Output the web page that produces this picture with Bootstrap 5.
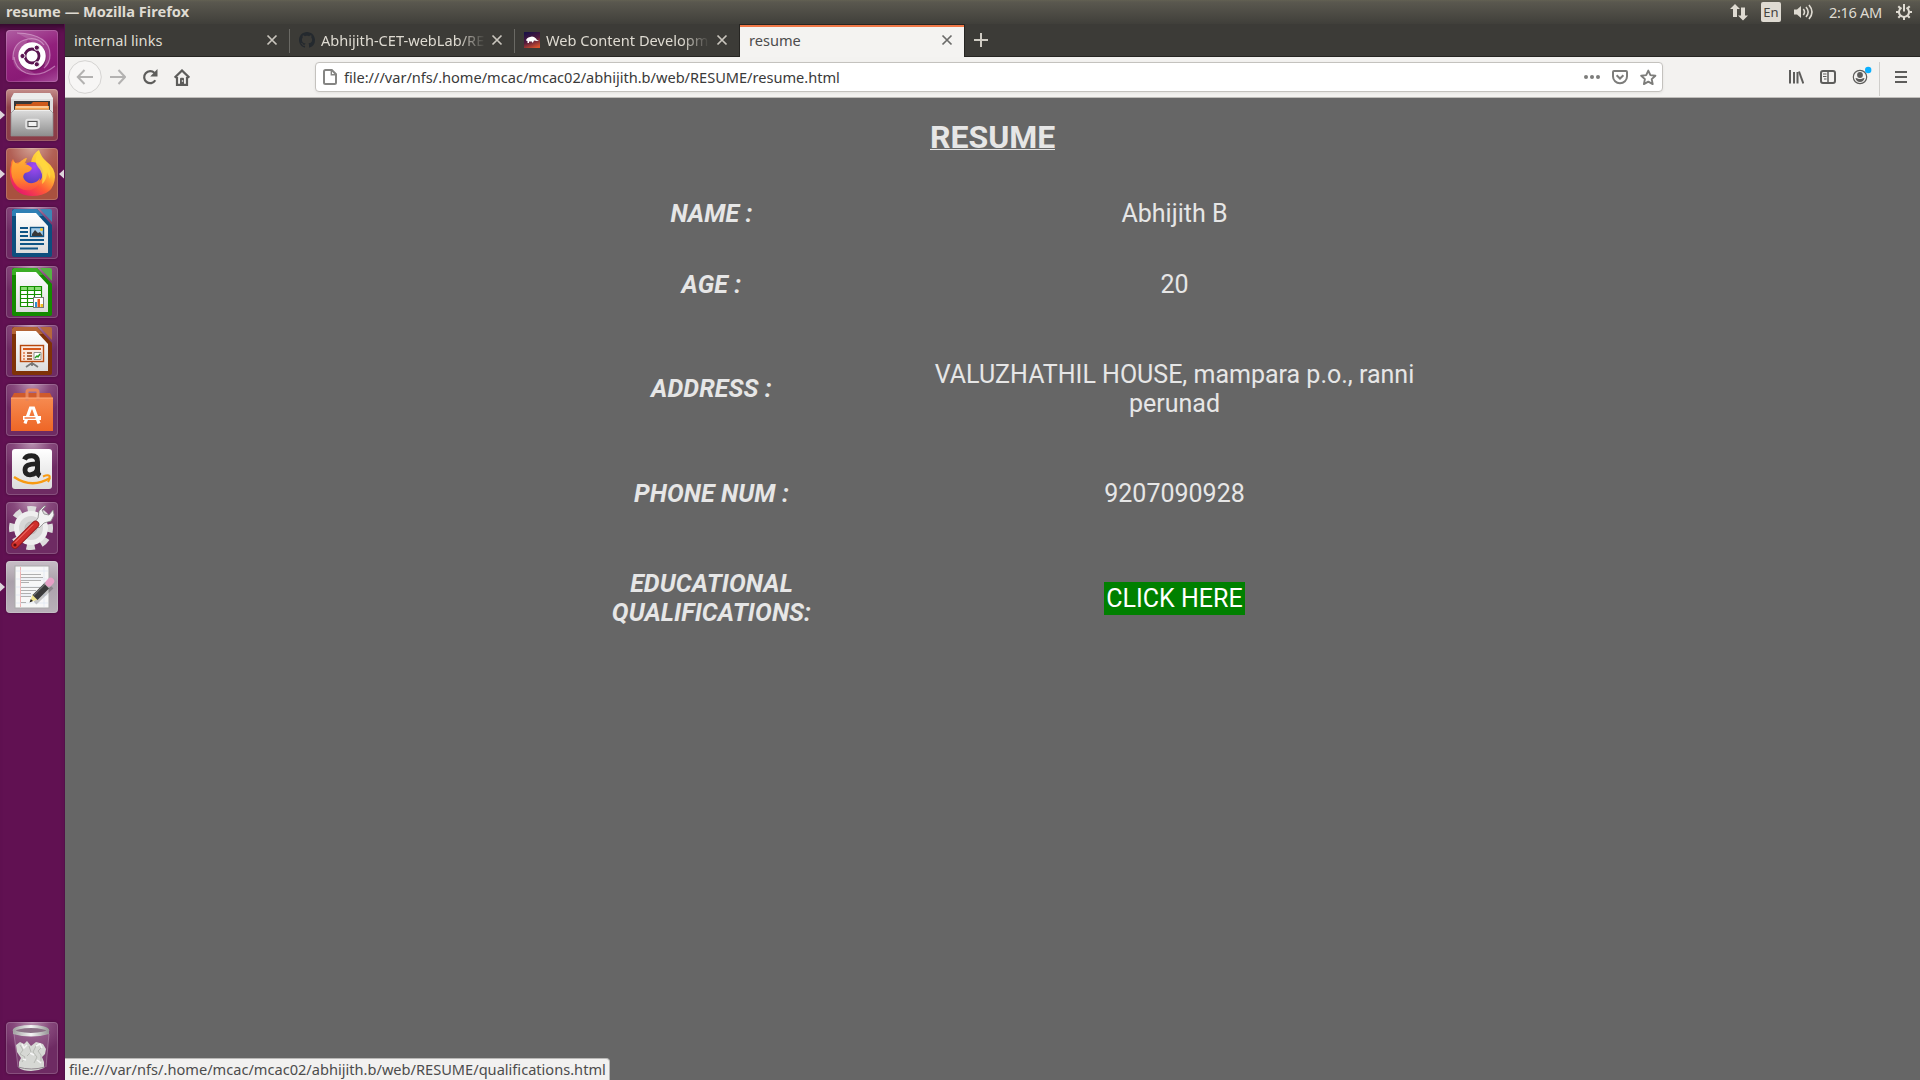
<!DOCTYPE html>
<html lang="en">
<head>
<meta charset="utf-8">
<title>resume</title>
<link href="https://cdn.jsdelivr.net/npm/bootstrap@5.3.0/dist/css/bootstrap.min.css" rel="stylesheet">
<style>
body{width:1920px;height:1080px;background:#666;font-family:"Noto Sans","Open Sans",sans-serif;font-size:14.6px;line-height:20px;color:#dfdbd2}
svg{display:block;flex:none}
.topbar{height:24px;background:linear-gradient(#636152 0,#5a584f 2px,#403f3a 100%);padding-left:6px;padding-right:8px}
.win-title{font-weight:700;letter-spacing:.02px;margin-top:-2px}
.kb{width:20px;height:20px;background:#dfdbd2;color:#45443f;border-radius:2px;font-size:13px;margin:0 13px 0 13px}
.clock{letter-spacing:-.35px;width:55px;white-space:nowrap;margin:-1px 12px 0 15px}
.launcher{width:65px;background:#611152;padding:6px 6px 6px 6px;border-right:1px solid #53104a;box-shadow:inset 0 9px 7px -6px #2c0826}
.tile{width:52px;height:52px;border-radius:4px;margin-bottom:7px;background:radial-gradient(ellipse 70% 60% at 50% 0,#b891b0 0,#87497c 50%,#6e2b63 100%);box-shadow:inset 0 0 0 1px #ffffff2c,0 0 3px #0005}
.tile-dash{background:linear-gradient(160deg,#b05fa3,#92207c 45%,#8a1a76 75%,#a84c9b)}
.tile-files{background:linear-gradient(#c58f8b,#8f4149 35%,#8a3d48)}
.tile-fox{background:radial-gradient(ellipse 70% 60% at 50% 0,#d2a294 0,#b26156 60%,#a9513f 100%)}
.tile-edit{background:linear-gradient(#c7bec6,#aaa0aa 40%,#b9b1b9)}
.pip{position:absolute;top:20px}
.pip-l{left:-6px}
.pip-r{right:-6px}
.tabstrip{height:33px;background:#3c3b37;border-bottom:1px solid #262522}
.tabx{height:32px;width:224px;padding:0 11px 0 9px}
.tabx .lbl{height:20px;white-space:nowrap}
.tabx .lbl.fade-lbl{margin-left:6px;-webkit-mask-image:linear-gradient(90deg,#000 84%,transparent 101%);mask-image:linear-gradient(90deg,#000 84%,transparent 101%)}
.tab-x{color:#c9c5bd;margin-left:auto}
.on .tab-x{color:#6b6b69}
.tab-sep{width:1px;height:24px;background:#6a6964;margin-top:5px}
.tabx.on{width:226px;height:33px;background:#f4f3f1;color:#4c4c4c;border:solid #262522;border-width:1px 1px 0;box-shadow:inset 0 2px #f07746;padding-bottom:2px}
.tools{height:41px;background:#f3f2f0;border-bottom:1px solid #bfbdba;padding-left:3px}
.ms-16{margin-left:16px}
.ms-12{margin-left:12px}
.ms-125{margin-left:125px}
.urlbar{width:1348px;height:30px;background:#fff;border:1px solid #c4c2be;border-radius:4px;color:#3a3a3a;box-shadow:0 1px 3px #0001;padding:0 5px 0 6px}
.url{letter-spacing:-.02px;padding-left:6px}
.tool-rule{width:1px;height:34px;background:#cfcecb;margin:3px 15px 0 7px}
.doc{background:#666;color:#e6e6e6;font-family:Roboto,sans-serif;font-size:25px;line-height:29px}
.doc h1{font-size:32px;font-weight:700;line-height:38px;margin:20px 0 0 865px;width:125px;height:38px;white-space:nowrap}
.doc h1 span{border-bottom:1px solid #e6e6e6;display:block;height:32px}
.facts{margin:0 0 0 526.5px;padding-top:22px}
.fact{gap:93.5px;height:71px;text-align:center;white-space:nowrap}
.fact dt{width:240px;font-weight:700;font-style:italic;letter-spacing:.1px}
.fact dd{width:499px;margin:0}
.fact .nudge{padding-bottom:2px}
.h-tall{height:137px}
.h-mid{height:73px}
.go{background:green;color:#fff;padding:2px;display:inline-block}
.status{position:absolute;left:0;bottom:0;height:22px;width:545px;background:#f2f1f0;color:#4c4c4c;border-top:1px solid #b9b8b6;border-right:1px solid #b9b8b6;border-radius:0 4px 0 0;padding-left:4px;white-space:nowrap}
</style>
<script src="https://cdn.jsdelivr.net/npm/bootstrap@5.3.0/dist/js/bootstrap.bundle.min.js"></script>
</head>
<body class="d-flex flex-column overflow-hidden">
<svg width="0" height="0" class="position-absolute" aria-hidden="true">
  <defs>
    <symbol id="x" viewBox="0 0 12 12"><path d="M1.500 1.500l9 9M10.500 1.500l-9 9" stroke="currentColor" stroke-width="1.700" fill="none"/></symbol>
    <symbol id="pip-r" viewBox="0 0 5 12"><path d="M0 1.500v9L5 6z" fill="#ddd5db"/></symbol>
    <symbol id="pip-l" viewBox="0 0 5 12"><path d="M5 1.500v9L0 6z" fill="#ddd5db"/></symbol>
    <linearGradient id="paper" x2="0" y2="1"><stop stop-color="#fff"/><stop offset="1" stop-color="#dcdcdc"/></linearGradient>
    <linearGradient id="metal" x2="0" y2="1"><stop stop-color="#dcdcdc"/><stop offset="1" stop-color="#8f8f8f"/></linearGradient>
    <linearGradient id="fox" x1="1" x2=".3" y2="1"><stop stop-color="#fff04d"/><stop offset=".4" stop-color="#ffc433"/><stop offset=".7" stop-color="#ff5a36"/><stop offset="1" stop-color="#e6186c"/></linearGradient>
    <linearGradient id="mane" x2="0" y2="1"><stop stop-color="#ffb035"/><stop offset=".6" stop-color="#ff8a2c"/><stop offset="1" stop-color="#fb4a44"/></linearGradient>
    <radialGradient id="globe" cx=".6" cy=".2" r=".9"><stop stop-color="#a44af5"/><stop offset="1" stop-color="#4c3bb8"/></radialGradient>
    <linearGradient id="bag" x2="0" y2="1"><stop stop-color="#f68a50"/><stop offset="1" stop-color="#ee6626"/></linearGradient>
    <linearGradient id="rim" x2="1"><stop stop-color="#a5a5a5"/><stop offset=".5" stop-color="#f5f5f5"/><stop offset="1" stop-color="#9b9b9b"/></linearGradient>
    <linearGradient id="fav" x1=".3" x2=".7" y2="1"><stop stop-color="#1d1146"/><stop offset=".5" stop-color="#501a3d"/><stop offset="1" stop-color="#d8512d"/></linearGradient>
  </defs>
</svg>

<header class="topbar d-flex align-items-center">
  <span class="win-title">resume — Mozilla Firefox</span>
  <div class="d-flex align-items-center ms-auto">
    <svg width="18" height="18" viewBox="0 0 18 18" fill="#dfdbd2"><path d="M5 1l5 5H7v8H3V6H0zM13 17.500l-5-5h3v-8h4v8h3z"/></svg>
    <span class="kb d-flex align-items-center justify-content-center">En</span>
    <svg width="20" height="18" viewBox="0 0 20 18"><path d="M0 6.500h3L7 3v12L3 11.500H0z" fill="#dfdbd2"/><g fill="none" stroke="#dfdbd2" stroke-width="1.600"><path d="M9.300 6q2.400 3 0 6"/><path d="M12 4q4.300 5 0 10"/><path d="M15 2q6 7 0 14"/></g></svg>
    <span class="clock">2:16 AM</span>
    <svg width="16" height="16" viewBox="0 0 16 16"><path d="M5.500 3.600a5 5 0 1 0 5 0" fill="none" stroke="#dfdbd2" stroke-width="2"/><path d="M8 0v7.500M0 8h3M13 8h3M8 13v3M2.300 2.300l2 2M13.700 2.300l-2 2M2.300 13.700l2-2M13.700 13.700l-2-2" stroke="#dfdbd2" stroke-width="2"/></svg>
  </div>
</header>

<div class="d-flex flex-grow-1">
  <aside class="launcher d-flex flex-column">
    <div class="tile tile-dash"><svg width="52" height="52" viewBox="0 0 52 52">
      <g fill="none" stroke="#e2b4db" stroke-opacity=".55" stroke-width="1.200"><path d="M11 3Q44 4 44 25q0 8-6 13"/><path d="M7 30Q6 12 22 9q10-2 16 6"/><path d="M49 36Q34 48 20 43 9 38 8 27"/></g>
      <path d="M11 3Q44 4 44 25q0 8-5 12-2-20-17-28zM7 30Q6 12 22 9l-8 18q4 13 16 17Q8 44 7 30z" fill="#fff" opacity=".14"/>
      <circle cx="26.500" cy="27" r="14" fill="#5b1850" opacity=".45"/><circle cx="26" cy="26" r="13.700" fill="#fff"/>
      <circle cx="26" cy="26" r="7" fill="none" stroke="#5a1450" stroke-width="2.800"/>
      <g fill="#5a1450" stroke="#fff" stroke-width="1"><circle cx="16.500" cy="26" r="2.600"/><circle cx="30.800" cy="17.700" r="2.600"/><circle cx="30.800" cy="34.300" r="2.600"/></g></svg></div>
    <div class="tile tile-files position-relative"><svg class="pip pip-l" width="5" height="12"><use href="#pip-r"/></svg><svg width="52" height="52" viewBox="0 0 52 52">
      <path d="M8 4h36l3 5v35H5V9z" fill="#ddd"/><path d="M8 4h36l3 6H5z" fill="#ececec"/><path d="M8 12h36v14H8z" fill="#383838"/>
      <path d="M10 15h15l2-2h15v11H10z" fill="#cf5a1b"/><path d="M9 17h34v6H9z" fill="#f7a650"/><path d="M10 18h32" stroke="#fff0dc"/>
      <path d="M8 21h36l3 3v23H5V24z" fill="url(#metal)" stroke="#8d8d8d" stroke-width=".7"/>
      <path d="M8 21.500h36" stroke="#eee"/><rect x="20" y="30.500" width="13" height="9" rx="2" fill="#ccc" stroke="#e4e4e4" stroke-width="1.600"/><rect x="22" y="32.500" width="9" height="5" fill="#f1f1f1" stroke="#555"/></svg></div>
    <div class="tile tile-fox position-relative"><svg class="pip pip-l" width="5" height="12"><use href="#pip-r"/></svg><svg class="pip pip-r" width="5" height="12"><use href="#pip-l"/></svg><svg width="52" height="52" viewBox="0 0 52 52">
      <path d="M5 17q0-4 2-6l2 4 6-1q3-4 6-4l-2 5 6 0q1-9 8-13 2 7 8 12 8 6 8 15Q48 48 26 48 6 47 4 28q-1-6 1-11z" fill="url(#fox)"/>
      <circle cx="26" cy="25" r="11" fill="url(#globe)"/>
      <path d="M7 13q3 3 5 3 3-4 7-5l-1 5q4 0 8 4-1 4-7 5-3 3-1 6 3 5 9 4 5-1 7-5 0 9-9 12-11 2-17-8-5-9-1-21z" fill="url(#mane)"/>
      <path d="M33 3q0 6 6 11 7 7 5 17l-3-7q0 8-5 12 2-11-4-17-5-6 1-16z" fill="#ffd83f" opacity=".85"/></svg></div>
    <div class="tile"><svg width="52" height="52" viewBox="0 0 52 52">
      <path d="M8 2h23l15 16v30q0 2-2 2H8q-2 0-2-2V4q0-2 2-2z" fill="#0d4e7e"/><path d="M8 2h23l6 7H6V4z" fill="#2e7fb4"/><path d="M10 6h20l12 13v27H10z" fill="url(#paper)"/><path d="M34 2h10q2 0 2 2v11z" fill="#3e86b4"/>
      <path d="M14 21h8M14 25h8M14 29h8M14 33h24M14 37h24M14 41.500h18" stroke="#0f5485" stroke-width="2"/><rect x="24.500" y="20.500" width="13" height="9" fill="#a5cde9" stroke="#0f5485" stroke-width="1.400"/><circle cx="35.500" cy="22.500" r="1.500" fill="#f8c724"/><path d="M26 29v-2l3-4 3 3 2-1 3 4z" fill="#393939"/></svg></div>
    <div class="tile"><svg width="52" height="52" viewBox="0 0 52 52">
      <path d="M8 2h23l15 16v30q0 2-2 2H8q-2 0-2-2V4q0-2 2-2z" fill="#148a00"/><path d="M8 2h23l6 7H6V4z" fill="#3bad25"/><path d="M10 6h20l12 13v27H10z" fill="url(#paper)"/><path d="M34 2h10q2 0 2 2v11z" fill="#56b244"/>
      <path d="M14.500 20.500h21v20h-21z" fill="#fff"/><path d="M14 20h22v4H14z" fill="#8cde75"/><path d="M14.500 20.500h21v20h-21zM21.500 20v20M28.500 20v20M14 24.500h22M14 28.500h22M14 32.500h22M14 36.500h22" fill="none" stroke="#169000" stroke-width="1.200"/><rect x="27.500" y="31.500" width="10" height="10" fill="#fff" stroke="#777"/><path d="M29 36h2v5h-2z" fill="#2d8fd2"/><path d="M31.500 33h2.500v8h-2.500z" fill="#e85c19"/><path d="M34.500 38H37v3h-2.500z" fill="#f1bf22"/></svg></div>
    <div class="tile"><svg width="52" height="52" viewBox="0 0 52 52">
      <path d="M8 2h23l15 16v30q0 2-2 2H8q-2 0-2-2V4q0-2 2-2z" fill="#7f3208"/><path d="M8 2h23l6 7H6V4z" fill="#b36436"/><path d="M10 6h20l12 13v27H10z" fill="url(#paper)"/><path d="M34 2h10q2 0 2 2v11z" fill="#b5683c"/>
      <path d="M26 37v4M26 38l-6 4M26 38l6 4" stroke="#777" stroke-width="1.700"/><rect x="14.500" y="20.500" width="23" height="16" fill="#fae9df" stroke="#b6480e" stroke-width="1.400"/><path d="M17 24h18" stroke="#d5591c" stroke-width="2"/><path d="M17 28h2M17 31h2M17 34h2" stroke="#e07a4a" stroke-width="1.700"/><path d="M21 28h5M21 31h5M21 34h5" stroke="#8e3c10" stroke-width="1.700"/><path d="M28 27.500h7v7h-7z" fill="#fff" stroke="#777" stroke-width=".8"/><path d="M29 33l2-2 1 1 2-3" stroke="#259b20" fill="none" stroke-width="1.400"/></svg></div>
    <div class="tile"><svg width="52" height="52" viewBox="0 0 52 52">
      <path d="M8 9h36l3 6H5z" fill="#cf5a2b"/><path d="M5 14h42v33H5z" fill="url(#bag)"/><path d="M21 17V8q0-2 2-2h7q2 0 2 2v9" fill="none" stroke="#e88459" stroke-width="3"/><path d="M5 14h42" stroke="#ffad7e"/>
      <path d="M19 39.500L24.500 24h3L33 39.500" fill="none" stroke="#fff" stroke-width="3.200"/><path d="M17 34h18" stroke="#fff" stroke-width="4"/><path d="M18.500 34h11" stroke="#ef6424" stroke-width="1.300"/></svg></div>
    <div class="tile"><svg width="52" height="52" viewBox="0 0 52 52">
      <rect x="6" y="6" width="40" height="40" rx="3" fill="url(#paper)"/>
      <g fill="none" stroke="#222"><path d="M18.500 16.500q1.500-3.800 7-3.800 6 0 6 6V28q0 3.500 2.500 5" stroke-width="5"/><path d="M31 20.800q-12-.3-12 6.200 0 4.800 5 4.800 7-.5 7.500-7" stroke-width="4.800"/></g>
      <path d="M8 34q18 12 36 1" fill="none" stroke="#f79a12" stroke-width="2.500"/><path d="M37 33.500q5-2 6.500-.5 1 2-1.500 6" fill="none" stroke="#f79a12" stroke-width="2"/></svg></div>
    <div class="tile"><svg width="52" height="52" viewBox="0 0 52 52">
      <circle cx="25" cy="26" r="19" fill="none" stroke="#dcdcdc" stroke-width="6" stroke-dasharray="8.200 6.724" transform="rotate(-12 25 26)"/><circle cx="25" cy="26" r="14.500" fill="#d7d7d7" stroke="#efefef" stroke-width="5"/><circle cx="25" cy="26" r="6" fill="#c4c4c4" stroke="#bbb"/>
      <path d="M38 4l-5 5-1 7-4 5 5 5 5-5 7-2 3-6-1-5-4 5-5-1-2-4 4-4z" fill="#f2f2f2" stroke="#888" stroke-width=".8"/>
      <path d="M9 43L29.500 22.500" stroke="#93191a" stroke-width="7.500" stroke-linecap="round"/><path d="M9 43L29.500 22.500" stroke="#d0302c" stroke-width="6" stroke-linecap="round"/><path d="M9 40.500L27 22.500" stroke="#f98279" stroke-width="1"/><circle cx="9" cy="43" r="1.600" fill="#5d0f10"/></svg></div>
    <div class="tile tile-edit position-relative"><svg class="pip pip-l" width="5" height="12"><use href="#pip-r"/></svg><svg width="52" height="52" viewBox="0 0 52 52">
      <rect x="9" y="5" width="34" height="42" fill="#f7f7f7" stroke="#a9a9a9"/><path d="M14.500 6v40" stroke="#efb2b2"/><path d="M10 10h32M10 18h32M10 26h32M10 34h32M10 42h32M38 6v40" stroke="#dce5f2" stroke-width=".7"/>
      <path d="M15 13.500h20M15 16.500h22M15 19.500h20M15 21.500h8M15 26.500h19M15 29.500h15M15 32.500h10M15 35.500h10M15 41.500h5" stroke="#b0b0b0" stroke-width="1"/>
      <path d="M29 42l17-16" stroke="#0003" stroke-width="4"/><path d="M24 41l2.500-7.500 5.500 5z" fill="#efe38c"/><path d="M23.500 41.500l1.300-3.500 2.200 2z" fill="#222"/><path d="M29 36.500L42 23.500" stroke="#3a3a3a" stroke-width="7"/><path d="M27.500 34.500l13-13" stroke="#707070" stroke-width="1.300"/><path d="M40.500 25l2.500-2.500" stroke="#aaa" stroke-width="7"/><path d="M43 22l1.700-1.700" stroke="#e6a0c6" stroke-width="7" stroke-linecap="round"/></svg></div>
    <div class="tile mt-auto mb-0"><svg width="52" height="52" viewBox="0 0 52 52">
      <path d="M8 12l4 33q14 5 28 0l3-33z" fill="#fff" opacity=".1"/><path d="M8 12l4 33M43 12l-3 33" stroke="#fff" opacity=".25"/>
      <path d="M10 23l4-3 4 2 3-3 4 5 5-4 4 1 3 1 3 5-1 5-3 3 2 5 0 6q-6 3-13 3-8 0-12-3l0-6 2-4-4-6z" fill="#d6d8d4"/><path d="M14 23l3 5-3 4 5 3-3 5M23 24l2 6-4 4M31 22l-4 8 4 5-3 6M36 25l-4 4 3 4 0 6" fill="none" stroke="#b3b5b0" stroke-width=".9"/><path d="M16 22l2 4 3-3M30 24l4-2 2 4M24 31l4 2M17 37l3 1M31 38l4 3" stroke="#f6f6f6" stroke-width="1.500" fill="none"/><path d="M12 45q13 4 27 0" fill="none" stroke="#8f868d"/>
      <path d="M7 9v3q18 5 36 0V9z" fill="url(#rim)"/><ellipse cx="25" cy="8.500" rx="16.800" ry="4" fill="#8b7186" stroke="url(#rim)" stroke-width="3"/></svg></div>
  </aside>

  <main class="d-flex flex-column flex-grow-1 position-relative">
    <nav class="tabstrip d-flex align-items-start">
      <div class="tabx d-flex align-items-center"><span class="lbl">internal links</span><svg class="tab-x" width="12" height="12"><use href="#x"/></svg></div>
      <span class="tab-sep"></span>
      <div class="tabx d-flex align-items-center">
        <svg width="16" height="16" viewBox="0 0 16 16"><path fill="#24292e" d="M8 0C3.580 0 0 3.580 0 8c0 3.540 2.290 6.530 5.470 7.590.4.070.55-.17.55-.38 0-.19-.01-.82-.01-1.490-2.010.37-2.530-.49-2.690-.94-.09-.23-.48-.94-.82-1.130-.28-.15-.68-.52-.01-.53.63-.01 1.080.58 1.230.82.72 1.210 1.870.87 2.330.66.070-.52.28-.87.510-1.070-1.780-.2-3.640-.89-3.640-3.950 0-.87.31-1.590.82-2.150-.08-.2-.36-1.020.08-2.120 0 0 .67-.21 2.200.82.64-.18 1.320-.27 2-.27s1.360.09 2 .27c1.530-1.040 2.200-.82 2.200-.82.44 1.100.16 1.920.08 2.120.51.56.82 1.270.82 2.150 0 3.070-1.870 3.750-3.650 3.950.29.25.54.73.54 1.480 0 1.070-.01 1.930-.01 2.200 0 .21.15.46.55.38A8.010 8.010 0 0 0 16 8c0-4.420-3.580-8-8-8z"/></svg>
        <span class="lbl fade-lbl">Abhijith-CET-webLab/RE</span><svg class="tab-x" width="12" height="12"><use href="#x"/></svg></div>
      <span class="tab-sep"></span>
      <div class="tabx d-flex align-items-center">
        <svg width="16" height="16" viewBox="0 0 16 16"><rect width="16" height="16" fill="url(#fav)"/><path d="M2 8.500q.5-3 4-3.500 2-1 4 0l2 1.500 1 1.500h2l-2 1-3-.5-1 2H8V9.500H5V11H3.500V9z" fill="#fff"/></svg>
        <span class="lbl fade-lbl">Web Content Developm</span><svg class="tab-x" width="12" height="12"><use href="#x"/></svg></div>
      <div class="tabx on d-flex align-items-center"><span class="lbl">resume</span><svg class="tab-x" width="12" height="12"><use href="#x"/></svg></div>
      <svg width="34" height="32" viewBox="0 0 34 32"><path d="M16 9v14M9 16h14" stroke="#d0ccc4" stroke-width="2"/></svg>
    </nav>

    <div class="tools d-flex align-items-center">
      <svg width="34" height="34" viewBox="0 0 34 34" fill="none"><circle cx="17" cy="17" r="16.300" fill="#f7f6f5" stroke="#d4d3d1"/><path d="M25 17H10M16.500 10L9.800 17l6.700 7" stroke="#b3b2b1" stroke-width="2"/></svg>
      <svg class="ms-2" width="16" height="16" viewBox="0 0 16 16" fill="none" stroke="#b3b2b1" stroke-width="2"><path d="M0 8h15M8.500 1L15 8l-6.500 7"/></svg>
      <svg class="ms-16" width="16" height="16" viewBox="0 0 16 16"><path d="M13.300 11.300A6 6 0 1 1 12.500 4" fill="none" stroke="#5d5d5b" stroke-width="2.200"/><path d="M15.500 0v7.500H8.200z" fill="#5d5d5b"/></svg>
      <svg class="ms-16" width="16" height="17" viewBox="0 0 16 17"><path d="M.7 8.700L8 1.500l7.300 7.200" fill="none" stroke="#5d5d5b" stroke-width="2.200"/><path d="M3 8v7.800h10V8" fill="none" stroke="#5d5d5b" stroke-width="2.200"/><path d="M6 15.500V9.800q0-1 1-1h2q1 0 1 1v5.700z" fill="#5d5d5b"/><circle cx="8.500" cy="12" r=".8" fill="#fff"/></svg>
      <div class="urlbar ms-125 d-flex align-items-center">
        <svg width="16" height="16" viewBox="0 0 16 16" fill="none" stroke="#858583" stroke-width="2"><path d="M3.500 1h6.300L14 5.200v8.300q0 1.500-1.500 1.500h-9Q2 15 2 13.500v-11Q2 1 3.500 1z"/><path d="M9.300 1v4.700H14" stroke-width="1.400"/></svg>
        <span class="url flex-grow-1">file:///var/nfs/.home/mcac/mcac02/abhijith.b/web/RESUME/resume.html</span>
        <svg width="16" height="16" viewBox="0 0 16 16" fill="#7d7d7b"><circle cx="2" cy="8" r="2"/><circle cx="8" cy="8" r="2"/><circle cx="14" cy="8" r="2"/></svg>
        <svg class="ms-12" width="16" height="16" viewBox="0 0 16 16" fill="none" stroke="#7d7d7b" stroke-width="2"><path d="M2 2h12q1 0 1 1v4.500a7 6.700 0 0 1-14 0V3q0-1 1-1z"/><path d="M4.600 6.200L8 9.500l3.400-3.300"/></svg>
        <svg class="ms-12" width="17" height="17" viewBox="0 0 17 17"><path d="M8.300 1.600l2.100 4.500 5 .6-3.700 3.400 1 5-4.400-2.500-4.400 2.500 1-5L1.200 6.700l5-.6z" fill="none" stroke="#7d7d7b" stroke-width="1.900" stroke-linejoin="round"/></svg>
      </div>
      <svg class="ms-125" width="16" height="16" viewBox="0 0 16 16" fill="none" stroke="#5d5d5b"><path d="M2 1v13.500M6 3v11.500M9.500 3v11.500" stroke-width="2"/><path d="M11 2.500l4.300 12" stroke-width="2"/></svg>
      <svg class="ms-16" width="16" height="16" viewBox="0 0 16 16" fill="none" stroke="#5d5d5b"><rect x="1" y="2" width="14" height="12" rx="2" stroke-width="2"/><path d="M8 2v12" stroke-width="1.500"/><path d="M3 5h3.500M3 7.500h3.500M4 10h2.500" stroke-width="1"/></svg>
      <svg class="ms-16" width="20" height="24" viewBox="0 0 20 24"><circle cx="8" cy="12" r="6.700" fill="none" stroke="#5d5d5b" stroke-width="1.200"/><circle cx="8" cy="10" r="2.900" fill="#5d5d5b"/><path d="M3.500 13q2 0 2.500.7 2 .8 4 0 .5-.7 2.500-.7-.8 4-4.500 4t-4.500-4z" fill="#5d5d5b"/><circle cx="16.200" cy="5" r="3.200" fill="#0ab0ff"/></svg>
      <span class="tool-rule"></span>
      <svg width="12" height="14" viewBox="0 0 12 14"><path d="M0 2h12M0 7h12M0 12h12" stroke="#5d5d5b" stroke-width="2"/></svg>
    </div>

    <section class="doc flex-grow-1">
      <h1><span>RESUME</span></h1>
      <dl class="facts">
        <div class="fact d-flex align-items-center"><dt>NAME :</dt><dd>Abhijith B</dd></div>
        <div class="fact d-flex align-items-center"><dt>AGE :</dt><dd>20</dd></div>
        <div class="fact h-tall d-flex align-items-center"><dt>ADDRESS :</dt><dd>VALUZHATHIL HOUSE, mampara p.o., ranni<br>perunad</dd></div>
        <div class="fact h-mid d-flex align-items-center"><dt>PHONE NUM :</dt><dd>9207090928</dd></div>
        <div class="fact h-tall d-flex align-items-center"><dt class="nudge">EDUCATIONAL<br>QUALIFICATIONS:</dt><dd><span class="go">CLICK HERE</span></dd></div>
      </dl>
    </section>
    <div class="status">file:///var/nfs/.home/mcac/mcac02/abhijith.b/web/RESUME/qualifications.html</div>
  </main>
</div>
</body></html>
